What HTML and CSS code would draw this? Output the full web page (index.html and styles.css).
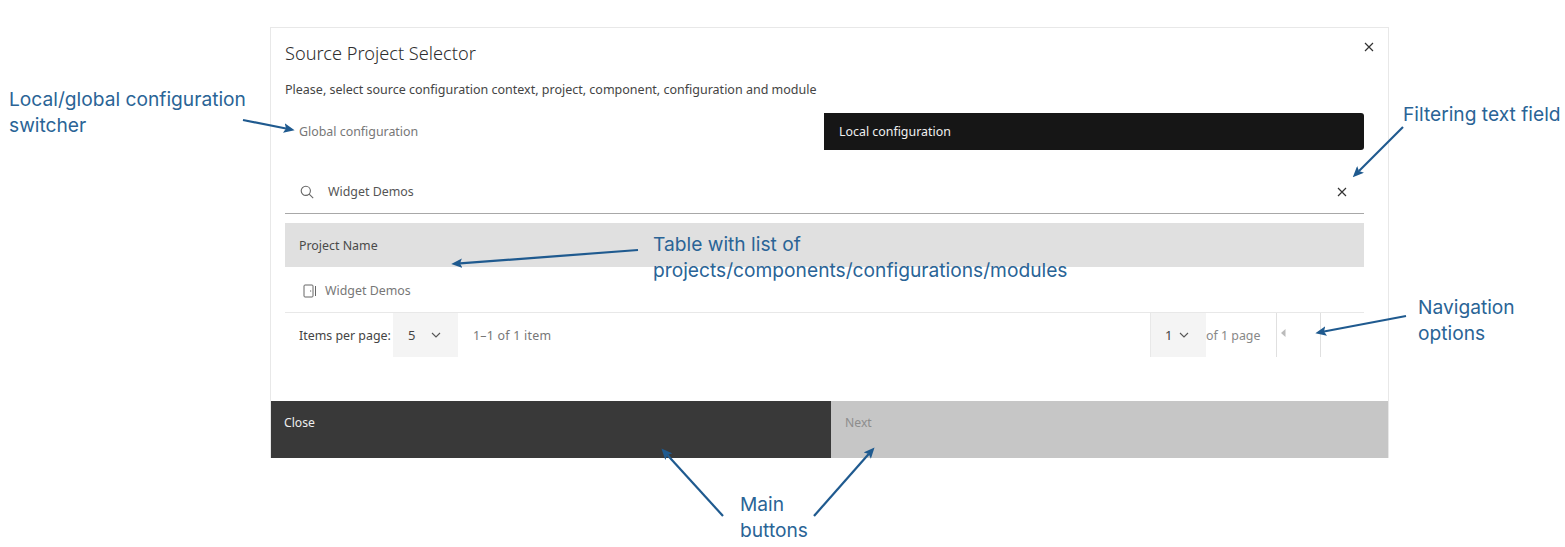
FILE: index.html
```html
<!DOCTYPE html>
<html lang="en">
<head>
<meta charset="utf-8">
<title>Source Project Selector</title>
<link rel="stylesheet" href="styles.css">
</head>
<body>
<main class="dialog">
  <div class="dialog-body">
    <header class="dialog-head">
      <h1 class="dialog-title">Source Project Selector</h1>
      <svg class="icon-close" viewBox="0 0 10 10"><path d="M1 1l8 8M9 1l-8 8"/></svg>
    </header>
    <p class="dialog-desc">Please, select source configuration context, project, component, configuration and module</p>
    <div class="switcher">
      <div class="switch-item switch-global">Global configuration</div>
      <div class="switch-item switch-active">Local configuration</div>
    </div>
    <div class="search">
      <svg class="icon-search" viewBox="0 0 14 14"><circle cx="5.8" cy="5.8" r="4.6"/><path d="M9.2 9.2l4 4"/></svg>
      <span class="search-text">Widget Demos</span>
      <svg class="icon-clear" viewBox="0 0 10 10"><path d="M1 1l8 8M9 1l-8 8"/></svg>
    </div>
    <div class="table-head">Project Name</div>
    <div class="table-row">
      <svg class="icon-door" viewBox="0 0 14 14"><rect x="1" y="1" width="9" height="12" rx="1"/><path d="M12.5 2v10M7 7h1.2"/></svg>
      <span>Widget Demos</span>
    </div>
    <div class="pager">
      <span class="pager-label">Items per page:</span>
      <div class="pager-select pager-size"><span>5</span>
        <svg class="chev" viewBox="0 0 10 6"><path d="M1 1l4 4 4-4"/></svg>
      </div>
      <span class="pager-range">1–1 of 1 item</span>
      <div class="pager-right">
        <div class="pager-select pager-page"><span>1</span>
          <svg class="chev" viewBox="0 0 10 6"><path d="M1 1l4 4 4-4"/></svg>
        </div>
        <span class="pager-of">of 1 page</span>
        <div class="pager-btn"><svg class="caret" viewBox="0 0 5 8"><path d="M4.5 0v8L0 4z"/></svg></div>
        <div class="pager-btn pager-end"></div>
      </div>
    </div>
  </div>
  <footer class="dialog-foot">
    <div class="btn btn-close">Close</div>
    <div class="btn btn-next">Next</div>
  </footer>
</main>

<div class="note note-switch">Local/global configuration<br>switcher</div>
<div class="note note-filter">Filtering text field</div>
<div class="note note-table">Table with list of<br>projects/components/configurations/modules</div>
<div class="note note-nav">Navigation<br>options</div>
<div class="note note-main">Main<br>buttons</div>

<svg class="arrows" viewBox="0 0 1565 547">
  <defs>
    <marker id="head" markerWidth="5" markerHeight="4.4" refX="1" refY="2.2" orient="auto"><path class="arrow-head" d="M0 0L5 2.2 0 4.4 1 2.2z"/></marker>
  </defs>
  <path class="arrow-line" d="M243 120L286 128.5"/>
  <path class="arrow-line" d="M1403 127L1359 171"/>
  <path class="arrow-line" d="M638 250L460 263.4"/>
  <path class="arrow-line" d="M1406 316L1324 331.5"/>
  <path class="arrow-line" d="M723 516L667.4 455"/>
  <path class="arrow-line" d="M814 516L868.7 454"/>
</svg>
</body>
</html>
```
FILE: styles.css
```css
* { box-sizing: border-box; }
html, body { margin: 0; padding: 0; }
body {
  width: 1565px;
  height: 547px;
  overflow: hidden;
  background: #fff;
  position: relative;
  padding: 27px 0 0 270px;
  font-family: "Noto Sans", "Liberation Sans", sans-serif;
  color: #393939;
}
.dialog {
  width: 1119px;
  height: 431px;
  display: flex;
  flex-direction: column;
  border: 1px solid #e8e8e8;
  border-bottom: 0;
}
.dialog-body { flex: 1; padding: 0 24px 0 14px; }
.dialog-head { height: 49px; display: flex; align-items: flex-start; justify-content: space-between; }
.dialog-title { margin: 14px 0 0; font-size: 18.2px; line-height: 22px; font-weight: 300; color: #2e2e2e; }
.icon-close { width: 10px; height: 10px; margin: 14px 0 0; transform: translateX(10px); }
.icon-close path, .icon-clear path { fill: none; stroke: #333; stroke-width: 1.2; }
.dialog-desc { margin: 4px 0 0; font-size: 12.5px; line-height: 18px; color: #444; white-space: nowrap; }
.switcher { display: flex; height: 37px; margin-top: 14px; }
.switch-item { display: flex; align-items: center; padding-left: 14px; font-size: 12.4px; color: #777; }
.switch-global { flex: 0 0 539px; }
.switch-active { flex: 1; padding-left: 15px; background: #161616; color: #f0f0f0; border-radius: 0 3px 3px 0; }
.search {
  display: flex;
  align-items: center;
  height: 44px;
  margin-top: 20px;
  padding: 0 17px 0 15px;
  border-bottom: 1px solid #a8a8a8;
  font-size: 12.4px;
  color: #555;
}
.icon-search { width: 14px; height: 14px; margin-right: 14px; }
.icon-search circle, .icon-search path { fill: none; stroke: #666; stroke-width: 1.1; }
.search-text { flex: 1; }
.icon-clear { width: 10px; height: 10px; }
.table-head {
  height: 44px;
  margin-top: 9px;
  padding-left: 14px;
  display: flex;
  align-items: center;
  background: #e0e0e0;
  font-size: 12.4px;
  color: #4a4a4a;
}
.table-row {
  height: 46px;
  padding: 2px 0 0 18px;
  display: flex;
  align-items: center;
  gap: 8px;
  border-bottom: 1px solid #e8e8e8;
  font-size: 12.4px;
  color: #777;
}
.icon-door { width: 14px; height: 14px; }
.icon-door rect, .icon-door path { fill: none; stroke: #666; stroke-width: 1; }
.pager { display: flex; align-items: center; height: 44px; font-size: 12.4px; padding-left: 14px; }
.pager-label { width: 94px; color: #444; white-space: nowrap; }
.pager-select { display: flex; align-items: center; height: 100%; background: #f4f4f4; font-size: 13px; color: #444; }
.pager-size { width: 65px; padding-left: 15px; gap: 16px; }
.pager-range { margin-left: 15px; color: #777; letter-spacing: 0.02em; }
.pager-right { display: flex; align-items: center; height: 100%; margin-left: auto; margin-right: 43px; }
.pager-page { width: 56px; padding-left: 14px; gap: 7px; border-left: 1px solid #e8e8e8; }
.pager-of { width: 70px; color: #888; white-space: nowrap; }
.pager-btn { width: 44px; height: 100%; border-left: 1px solid #e0e0e0; display: flex; align-items: center; padding-left: 4px; }
.pager-end { width: 0; padding: 0; }
.chev { width: 10px; height: 6px; }
.chev path { fill: none; stroke: #555; stroke-width: 1.1; }
.caret { width: 5px; height: 8px; transform: translateY(-2px); }
.caret path { fill: #bbb; }
.dialog-foot { display: flex; height: 57px; font-size: 12.2px; }
.btn { padding: 13px 0 0 13px; }
.btn-close { width: 560px; background: #393939; color: #eee; }
.btn-next { flex: 1; padding-left: 14px; background: #c6c6c6; color: #8d8d8d; }

.note { position: absolute; font-family: Inter, "Noto Sans", sans-serif; font-size: 19.2px; line-height: 25.5px; color: #2a6496; white-space: nowrap; }
.note-switch { left: 9px; top: 87px; }
.note-filter { left: 1403px; top: 102px; }
.note-table { left: 653px; top: 232px; }
.note-nav { left: 1418px; top: 295px; }
.note-main { left: 740px; top: 492px; }
.arrows { position: absolute; left: 0; top: 0; width: 1565px; height: 547px; pointer-events: none; }
.arrow-line { fill: none; stroke: #1f5a8f; stroke-width: 2.2; marker-end: url(#head); }
.arrow-head { fill: #1f5a8f; }
```
